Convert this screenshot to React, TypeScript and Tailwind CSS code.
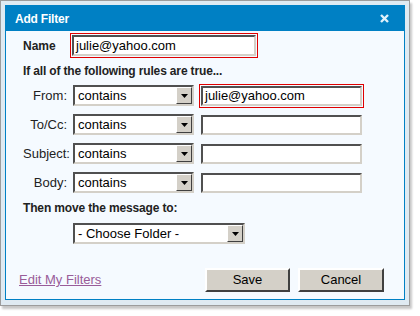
import React from "react";

const font = { fontFamily: '"Liberation Sans", Arial, sans-serif' };

function Arrow() {
  return (
    <div className="w-[16px] h-full bg-[#d4d0c8] border border-t-white border-l-white border-r-[#404040] border-b-[#404040] flex items-center justify-center">
      <svg width="7" height="4" viewBox="0 0 7 4">
        <polygon points="0,0 7,0 3.5,4" fill="#000" />
      </svg>
    </div>
  );
}

function Select({ text, w }: { text: string; w: string }) {
  return (
    <div
      className={`${w} h-[21px] bg-white border-2 border-t-[#505050] border-l-[#505050] border-r-[#d4d0c8] border-b-[#d4d0c8] flex items-stretch`}
    >
      <div className="flex-1 flex items-center pl-[3px] text-[13px] text-black leading-none">{text}</div>
      <Arrow />
    </div>
  );
}

function TextInput({ value, red }: { value?: string; red?: boolean }) {
  return (
    <div className={`p-[1px] border ${red ? "border-[#e00000]" : "border-transparent"}`}>
      <div className="w-[161px] h-[20px] bg-white border-2 border-t-[#505050] border-l-[#505050] border-r-[#d4d0c8] border-b-[#d4d0c8] flex items-center pl-[2px] text-[13px] text-black leading-none">
        {value}
      </div>
    </div>
  );
}

function Row({ label, value, red }: { label: string; value?: string; red?: boolean }) {
  return (
    <div className="flex items-center h-[21px]">
      <div className="w-[50px] text-right text-[13px] text-[#222] pr-[6px] leading-none">{label}</div>
      <Select text="contains" w="w-[121px]" />
      <div className="ml-[5px]">
        <TextInput value={value} red={red} />
      </div>
    </div>
  );
}

export default function App() {
  return (
    <div className="w-[420px] h-[316px] bg-white" style={font}>
      <div className="w-[410px] h-[306px] border border-[#9c9c9c] bg-[#dfeaf2] pt-[4px] pl-[4px] pr-[4px] pb-[5px] shadow-[2px_3px_2px_rgba(0,0,0,0.22)]">
        <div className="h-full flex flex-col border border-[#0080c4]">
          <div className="h-[25px] bg-[#0080c4] flex items-center justify-between pl-[9px] pr-[15px]">
            <span className="text-white font-bold text-[12px] tracking-[-0.2px]">Add Filter</span>
            <svg width="9" height="9" viewBox="0 0 9 9">
              <path d="M1 1 L8 8 M8 1 L1 8" stroke="#dff0fa" strokeWidth="2.4" />
            </svg>
          </div>
          <div className="flex-1 bg-[#f5faff] flex flex-col pl-[17px]">
            <div className="flex items-center mt-[2px] h-[25px]">
              <div className="w-[47px] font-bold text-[12px] text-[#222]">Name</div>
              <div className="w-[188px] h-[25px] border border-[#e00000] p-[1px]">
                <div className="h-full bg-white border-2 border-t-[#505050] border-l-[#505050] border-r-[#d4d0c8] border-b-[#d4d0c8] flex items-center pl-[2px] text-[13px] text-black leading-none">
                  julie@yahoo.com
                </div>
              </div>
            </div>
            <div className="mt-[5px] h-[16px] flex items-center font-bold text-[12px] text-[#222] tracking-[-0.15px]">
              If all of the following rules are true...
            </div>
            <div className="mt-[6px] flex flex-col gap-[8px]">
              <Row label="From:" value="julie@yahoo.com" red />
              <Row label="To/Cc:" />
              <Row label="Subject:" />
              <Row label="Body:" />
            </div>
            <div className="mt-[7px] h-[16px] flex items-center font-bold text-[12px] text-[#222] tracking-[-0.15px]">
              Then move the message to:
            </div>
            <div className="mt-[7px] ml-[50px]">
              <Select text="- Choose Folder -" w="w-[172px]" />
            </div>
            <div className="mt-[24px] flex items-center h-[24px]">
              <a href="#" className="ml-[-4px] text-[13px] text-[#995c99] underline">Edit My Filters</a>
              <div className="ml-auto mr-[20px] flex gap-[8px]">
                <button className="w-[85px] h-[24px] bg-[#d4d0c8] border-2 border-t-white border-l-white border-r-[#404040] border-b-[#404040] text-[13px] text-black">Save</button>
                <button className="w-[86px] h-[24px] bg-[#d4d0c8] border-2 border-t-white border-l-white border-r-[#404040] border-b-[#404040] text-[13px] text-black">Cancel</button>
              </div>
            </div>
          </div>
        </div>
      </div>
    </div>
  );
}
